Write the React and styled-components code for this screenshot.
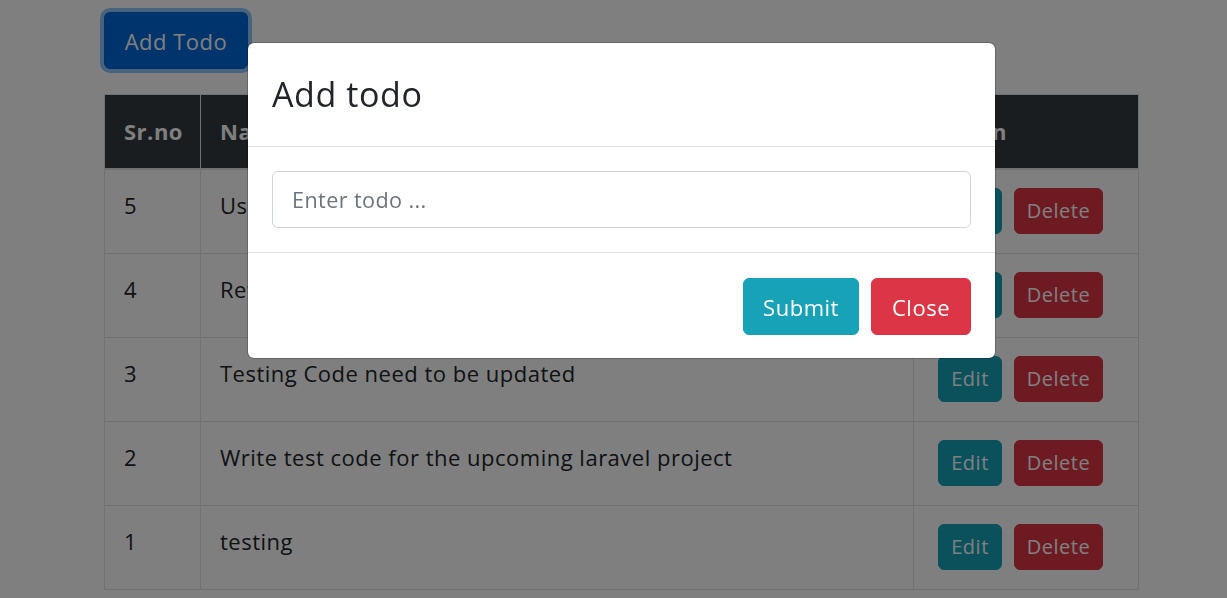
import React from "react";
import styled, { createGlobalStyle } from "styled-components";

const GlobalStyle = createGlobalStyle`
  html, body { margin: 0; padding: 0; background: #ffffff; }
  body {
    font-family: "Open Sans", "Noto Sans", Arial, sans-serif;
    font-size: 22px;
    letter-spacing: 0.5px;
    line-height: 1.6;
    color: #212529;
  }
  * { box-sizing: border-box; }
`;

const Page = styled.div`
  width: 1035px;
  margin-left: 104px;
  padding-top: 12px;
`;

const Toolbar = styled.div`
  display: flex;
  margin-bottom: 25px;
`;

const Button = styled.button`
  font-family: inherit;
  font-size: ${(p) => p.$size || 22}px;
  letter-spacing: 0.5px;
  line-height: 1;
  color: #ffffff;
  border: 1px solid ${(p) => p.$border || p.$bg};
  background: ${(p) => p.$bg};
  width: ${(p) => p.$w}px;
  height: ${(p) => p.$h || 57}px;
  padding: 0;
  border-radius: ${(p) => p.$r || 6}px;
  display: inline-flex;
  align-items: center;
  justify-content: center;
  cursor: pointer;
  box-shadow: ${(p) => (p.$focus ? "0 0 0 4px rgba(38, 143, 255, 0.5)" : "none")};
`;

const Table = styled.table`
  width: 1035px;
  border-collapse: collapse;
  table-layout: fixed;
`;

const Th = styled.th`
  background: #343a40;
  color: #ffffff;
  font-weight: 700;
  text-align: left;
  padding: 19px 18px 19px 19px;
  border: 1px solid #dee2e6;
  border-bottom-width: 2px;
  width: ${(p) => (p.$w ? `${p.$w}px` : "auto")};
  vertical-align: middle;
`;

const Td = styled.td`
  padding: 18px 18px 18px 19px;
  border: 1px solid #dee2e6;
  vertical-align: top;
  height: 84px;
`;

const Actions = styled.div`
  display: flex;
  gap: 12px;
  padding-left: 5px;
`;

const Backdrop = styled.div`
  position: fixed;
  inset: 0;
  background: rgba(0, 0, 0, 0.5);
  display: flex;
  align-items: flex-start;
  justify-content: flex-start;
`;

const Dialog = styled.div`
  margin: 42px 0 0 247px;
  width: 749px;
  background: #ffffff;
  border: 1px solid rgba(0, 0, 0, 0.2);
  border-radius: 7px;
  display: flex;
  flex-direction: column;
  background-clip: padding-box;
`;

const Header = styled.div`
  padding: 24px;
  border-bottom: 1px solid #dee2e6;
  height: 104px;
  display: flex;
  align-items: center;
`;

const Title = styled.h5`
  margin: 0;
  font-size: 34px;
  letter-spacing: 0.6px;
  font-weight: 400;
  line-height: 1.6;
  color: #212529;
`;

const Body = styled.div`
  padding: 24px;
  border-bottom: 1px solid #dee2e6;
`;

const Input = styled.input`
  width: 100%;
  height: 57px;
  font-family: inherit;
  font-size: 21.6px;
  letter-spacing: 0.4px;
  padding: 0 19px;
  border: 1px solid #ced4da;
  border-radius: 6px;
  color: #495057;
  outline: none;
  &::placeholder { color: #6c757d; }
`;

const Footer = styled.div`
  display: flex;
  justify-content: flex-end;
  gap: 12px;
  padding: 25px 24px 23px 24px;
`;

const rows = [
  { id: 5, name: "Use the latest version of the framework" },
  { id: 4, name: "Refactor the controller methods" },
  { id: 3, name: "Testing Code need to be updated" },
  { id: 2, name: "Write test code for the upcoming laravel project" },
  { id: 1, name: "testing" },
];

export default function App() {
  return (
    <>
      <GlobalStyle />
      <Page>
        <Toolbar>
          <Button $bg="#0069d9" $border="#0062cc" $focus $w={144}>
            Add Todo
          </Button>
        </Toolbar>
        <Table>
          <thead>
            <tr>
              <Th $w={96}>Sr.no</Th>
              <Th>Name</Th>
              <Th $w={225}>Action</Th>
            </tr>
          </thead>
          <tbody>
            {rows.map((r) => (
              <tr key={r.id}>
                <Td>{r.id}</Td>
                <Td>{r.name}</Td>
                <Td>
                  <Actions>
                    <Button $bg="#17a2b8" $w={64} $h={46} $size={20}>Edit</Button>
                    <Button $bg="#dc3545" $w={89} $h={46} $size={20}>Delete</Button>
                  </Actions>
                </Td>
              </tr>
            ))}
          </tbody>
        </Table>
      </Page>
      <Backdrop>
        <Dialog>
          <Header>
            <Title>Add todo</Title>
          </Header>
          <Body>
            <Input placeholder="Enter todo ..." />
          </Body>
          <Footer>
            <Button $bg="#17a2b8" $w={116}>Submit</Button>
            <Button $bg="#dc3545" $w={100}>Close</Button>
          </Footer>
        </Dialog>
      </Backdrop>
    </>
  );
}
